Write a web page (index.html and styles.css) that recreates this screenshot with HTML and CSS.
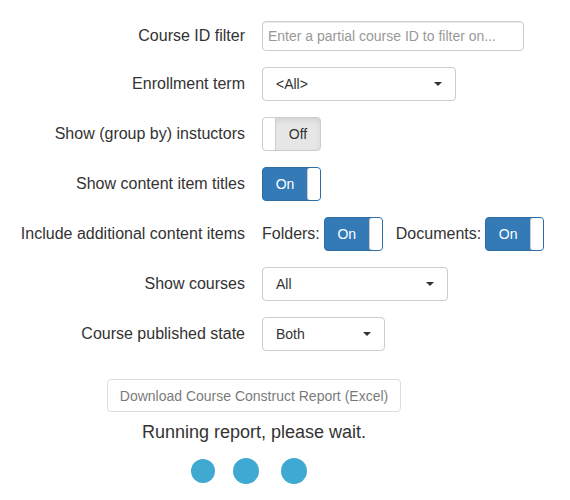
FILE: index.html
```html
<!DOCTYPE html>
<html>
<head>
<meta charset="utf-8">
<link rel="stylesheet" href="styles.css">
</head>
<body>
<div class="page">
  <div class="form">
    <label class="lbl">Course ID filter</label>
    <input class="text-input" type="text" placeholder="Enter a partial course ID to filter on...">

    <label class="lbl">Enrollment term</label>
    <div class="select select-term"><span>&lt;All&gt;</span><span class="caret"></span></div>

    <label class="lbl">Show (group by) instuctors</label>
    <div class="toggle off"><span class="toggle-handle"></span><span class="toggle-label">Off</span></div>

    <label class="lbl">Show content item titles</label>
    <div class="toggle on"><span class="toggle-label">On</span><span class="toggle-handle"></span></div>

    <label class="lbl">Include additional content items</label>
    <div class="inline-group">
      <span class="sub-lbl">Folders:</span>
      <div class="toggle on"><span class="toggle-label">On</span><span class="toggle-handle"></span></div>
      <span class="sub-lbl sub-lbl-2">Documents:</span>
      <div class="toggle on"><span class="toggle-label">On</span><span class="toggle-handle"></span></div>
    </div>

    <label class="lbl">Show courses</label>
    <div class="select select-courses"><span>All</span><span class="caret"></span></div>

    <label class="lbl">Course published state</label>
    <div class="select select-state"><span>Both</span><span class="caret"></span></div>
  </div>

  <div class="actions">
    <button class="btn-download" disabled>Download Course Construct Report (Excel)</button>
    <div class="running">Running report, please wait.</div>
    <div class="dots">
      <span class="dot dot-1"></span>
      <span class="dot dot-2"></span>
      <span class="dot dot-3"></span>
    </div>
  </div>
</div>
</body>
</html>
```

FILE: styles.css
```css
html, body {
  margin: 0;
  padding: 0;
  background: #fff;
}

body {
  font-family: "Liberation Sans", Arial, Helvetica, sans-serif;
  color: #333;
  font-size: 14px;
}

.page {
  width: 570px;
  padding-top: 21px;
}

.form {
  display: grid;
  grid-template-columns: 245px auto;
  column-gap: 17px;
  row-gap: 16px;
  align-items: center;
  justify-items: start;
}

.lbl {
  justify-self: end;
  text-align: right;
  font-size: 16px;
  color: #333;
  white-space: nowrap;
}

.text-input {
  box-sizing: border-box;
  width: 262px;
  height: 30px;
  margin: 0;
  padding: 4px 5px;
  border: 1px solid #ccc;
  border-radius: 4px;
  font-family: "Liberation Sans", Arial, sans-serif;
  font-size: 14px;
  color: #333;
  box-shadow: inset 0 1px 1px rgba(0,0,0,.075);
}

.text-input::placeholder {
  color: #999;
}

.select {
  box-sizing: border-box;
  height: 34px;
  display: flex;
  align-items: center;
  justify-content: space-between;
  padding: 0 13px 0 13px;
  border: 1px solid #ccc;
  border-radius: 4px;
  background: #fff;
  font-size: 14px;
  color: #333;
}

.select-term { width: 194px; }
.select-courses { width: 186px; }
.select-state { width: 123px; }

.caret {
  width: 0;
  height: 0;
  border-left: 4px solid transparent;
  border-right: 4px solid transparent;
  border-top: 4px solid #333;
}

.toggle {
  box-sizing: border-box;
  width: 59px;
  height: 34px;
  display: flex;
  border-radius: 4px;
  overflow: hidden;
  font-size: 14px;
}

.toggle-label {
  flex: 1;
  display: flex;
  align-items: center;
  justify-content: center;
}

.toggle-handle {
  box-sizing: border-box;
  width: 13px;
  background: #fff;
  border-radius: 4px;
}

.toggle.on {
  background: #337ab7;
  border: 1px solid #2e6da4;
  color: #fff;
}

.toggle.on .toggle-handle {
  border: 1px solid #ccc;
  border-right: none;
  margin: -1px -1px -1px 0;
  width: 14px;
  border-radius: 4px 4px 4px 4px;
}

.toggle.off {
  background: #e6e6e6;
  border: 1px solid #ccc;
  color: #333;
  box-shadow: inset 0 3px 5px rgba(0,0,0,.08);
}

.toggle.off .toggle-handle {
  border-right: 1px solid #ccc;
  border-radius: 3px 0 0 3px;
}

.inline-group {
  display: flex;
  align-items: center;
}

.sub-lbl {
  font-size: 16px;
  color: #333;
  margin-right: 4px;
}

.sub-lbl-2 {
  margin-left: 13px;
  margin-right: 4px;
}

.actions {
  width: 508px;
  display: flex;
  flex-direction: column;
  align-items: center;
  margin-top: 28px;
}

.btn-download {
  box-sizing: border-box;
  width: 294px;
  height: 33px;
  padding: 0;
  background: #fff;
  border: 1px solid #ccc;
  border-radius: 4px;
  font-family: "Liberation Sans", Arial, sans-serif;
  font-size: 14px;
  color: #333;
  opacity: .65;
}

.running {
  margin-top: 10px;
  font-size: 18px;
  line-height: 20px;
  color: #333;
}

.dots {
  display: flex;
  align-items: center;
  margin-top: 16px;
  margin-left: -10px;
  height: 26px;
}

.dot {
  display: block;
  border-radius: 50%;
  background: #40a9d1;
}

.dot-1 { width: 24px; height: 24px; margin-right: 18px; }
.dot-2 { width: 26px; height: 26px; margin-right: 22px; }
.dot-3 { width: 26px; height: 26px; }
```
